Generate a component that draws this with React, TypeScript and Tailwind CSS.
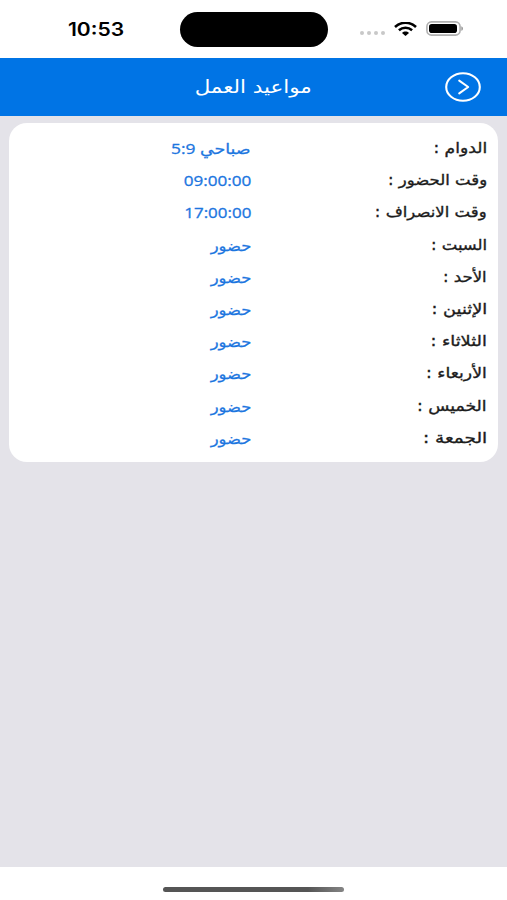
interface ScheduleRow {
  label: string;
  value: string;
  labelScale: string;
  valueScale: string;
}

const rows: ScheduleRow[] = [
  { label: "الدوام :", value: "صباحي 5:9", labelScale: "scale-x-[1.14]", valueScale: "scale-x-[1.16]" },
  { label: "وقت الحضور :", value: "09:00:00", labelScale: "scale-x-[1.1]", valueScale: "scale-x-[1.14]" },
  { label: "وقت الانصراف :", value: "17:00:00", labelScale: "scale-x-[1.1]", valueScale: "scale-x-[1.13]" },
  { label: "السبت :", value: "حضور", labelScale: "scale-x-[1.1]", valueScale: "scale-x-[1.09]" },
  { label: "الأحد :", value: "حضور", labelScale: "scale-x-[1.1]", valueScale: "scale-x-[1.09]" },
  { label: "الإثنين :", value: "حضور", labelScale: "scale-x-[1.18]", valueScale: "scale-x-[1.09]" },
  { label: "الثلاثاء :", value: "حضور", labelScale: "scale-x-[1.18]", valueScale: "scale-x-[1.09]" },
  { label: "الأربعاء :", value: "حضور", labelScale: "scale-x-[1.15]", valueScale: "scale-x-[1.09]" },
  { label: "الخميس :", value: "حضور", labelScale: "scale-x-[1.15]", valueScale: "scale-x-[1.09]" },
  { label: "الجمعة :", value: "حضور", labelScale: "scale-x-[1.23]", valueScale: "scale-x-[1.09]" },
];

/* ---------------- STATUS BAR ---------------- */
const StatusBar = () => (
  <div dir="ltr" className="flex h-[58px] shrink-0 items-start bg-white">
    <div className="flex w-[180px] justify-center pt-[18px] pl-3">
      <span className="inline-block scale-x-[1.17] font-['Inter',sans-serif] text-[18px] leading-6 font-semibold text-black">
        10:53
      </span>
    </div>
    <div className="mt-3 h-[35px] w-[148px] rounded-full bg-black" />
    <div className="ml-8 flex h-[57px] items-center">
      <div className="mt-[9px] flex gap-[3px]">
        <span className="size-1 rounded-full bg-[#c8c8c8]" />
        <span className="size-1 rounded-full bg-[#c8c8c8]" />
        <span className="size-1 rounded-full bg-[#c8c8c8]" />
        <span className="size-1 rounded-full bg-[#c8c8c8]" />
      </div>
      <svg className="ml-[9px] h-[14px] w-[23px]" viewBox="0 0 23 14" fill="none" stroke="#000">
        <path d="M1 5C7-.6 16-.6 22 5" strokeWidth="2.6" />
        <path d="M4.9 8.2c3.8-3.4 9.4-3.4 13.2 0" strokeWidth="2.5" />
        <path d="M8 11c2-1.9 5-1.9 7 0l-3.5 3z" fill="#000" stroke="none" />
      </svg>
      <svg className="ml-[9px] h-[15px] w-[38px]" viewBox="0 0 38 15">
        <rect x=".9" y=".9" width="33.2" height="13.2" rx="4.6" fill="#fff" stroke="#b0b0b0" strokeWidth="1.6" />
        <rect x="3" y="3" width="28" height="9" rx="2.8" fill="#000" />
        <path d="M35.4 5.2c2 .8 2 3.8 0 4.6z" fill="#8d8d8d" />
      </svg>
    </div>
  </div>
);

/* ---------------- HEADER ---------------- */
const Header = () => (
  <header className="grid h-[58px] shrink-0 grid-cols-[1fr_auto_1fr] items-center bg-[#0074e5]">
    <button className="mr-[26px] justify-self-start" aria-label="رجوع">
      <svg className="h-[30px] w-9" viewBox="0 0 36 30" fill="none" stroke="#fff" strokeWidth="2.1">
        <ellipse cx="18" cy="15" rx="16.8" ry="13.8" />
        <path d="M14.2 8.6l9 6.4-9 6.4" strokeWidth="2" strokeLinecap="round" strokeLinejoin="round" />
      </svg>
    </button>
    <h1 className="scale-x-[1.19] text-[18px] leading-6 text-white">مواعيد العمل</h1>
  </header>
);

/* ---------------- PAGE ---------------- */
export default function App() {
  return (
    <div
      dir="rtl"
      className="flex h-[900px] w-[507px] flex-col overflow-hidden bg-[#e4e3e9] font-['DejaVu_Sans',sans-serif]"
    >
      <StatusBar />
      <Header />
      <main className="flex-1 px-[9px] pt-[7px]">
        <div className="h-[339px] rounded-[18px] bg-white pt-[9px] pr-[11px] pl-3">
          {rows.map((row) => (
            <div key={row.label} className="flex h-[32.2px] items-center text-[15px] leading-6 whitespace-nowrap">
              <div className="w-[236px] text-[#1c1c1c] [-webkit-text-stroke:0.35px_#1c1c1c]">
                <span className={`inline-block origin-right ${row.labelScale}`}>{row.label}</span>
              </div>
              <div className="font-['Open_Sans','DejaVu_Sans',sans-serif] text-[#1c76df] [-webkit-text-stroke:0.3px_#1c76df]">
                <span className={`inline-block origin-right ${row.valueScale}`}>{row.value}</span>
              </div>
            </div>
          ))}
        </div>
      </main>
      <footer className="flex h-[33px] shrink-0 justify-center bg-white pt-5">
        <div className="h-[5px] w-[181px] rounded-full bg-linear-to-r from-[#555] from-80% to-[#858585]" />
      </footer>
    </div>
  );
}
